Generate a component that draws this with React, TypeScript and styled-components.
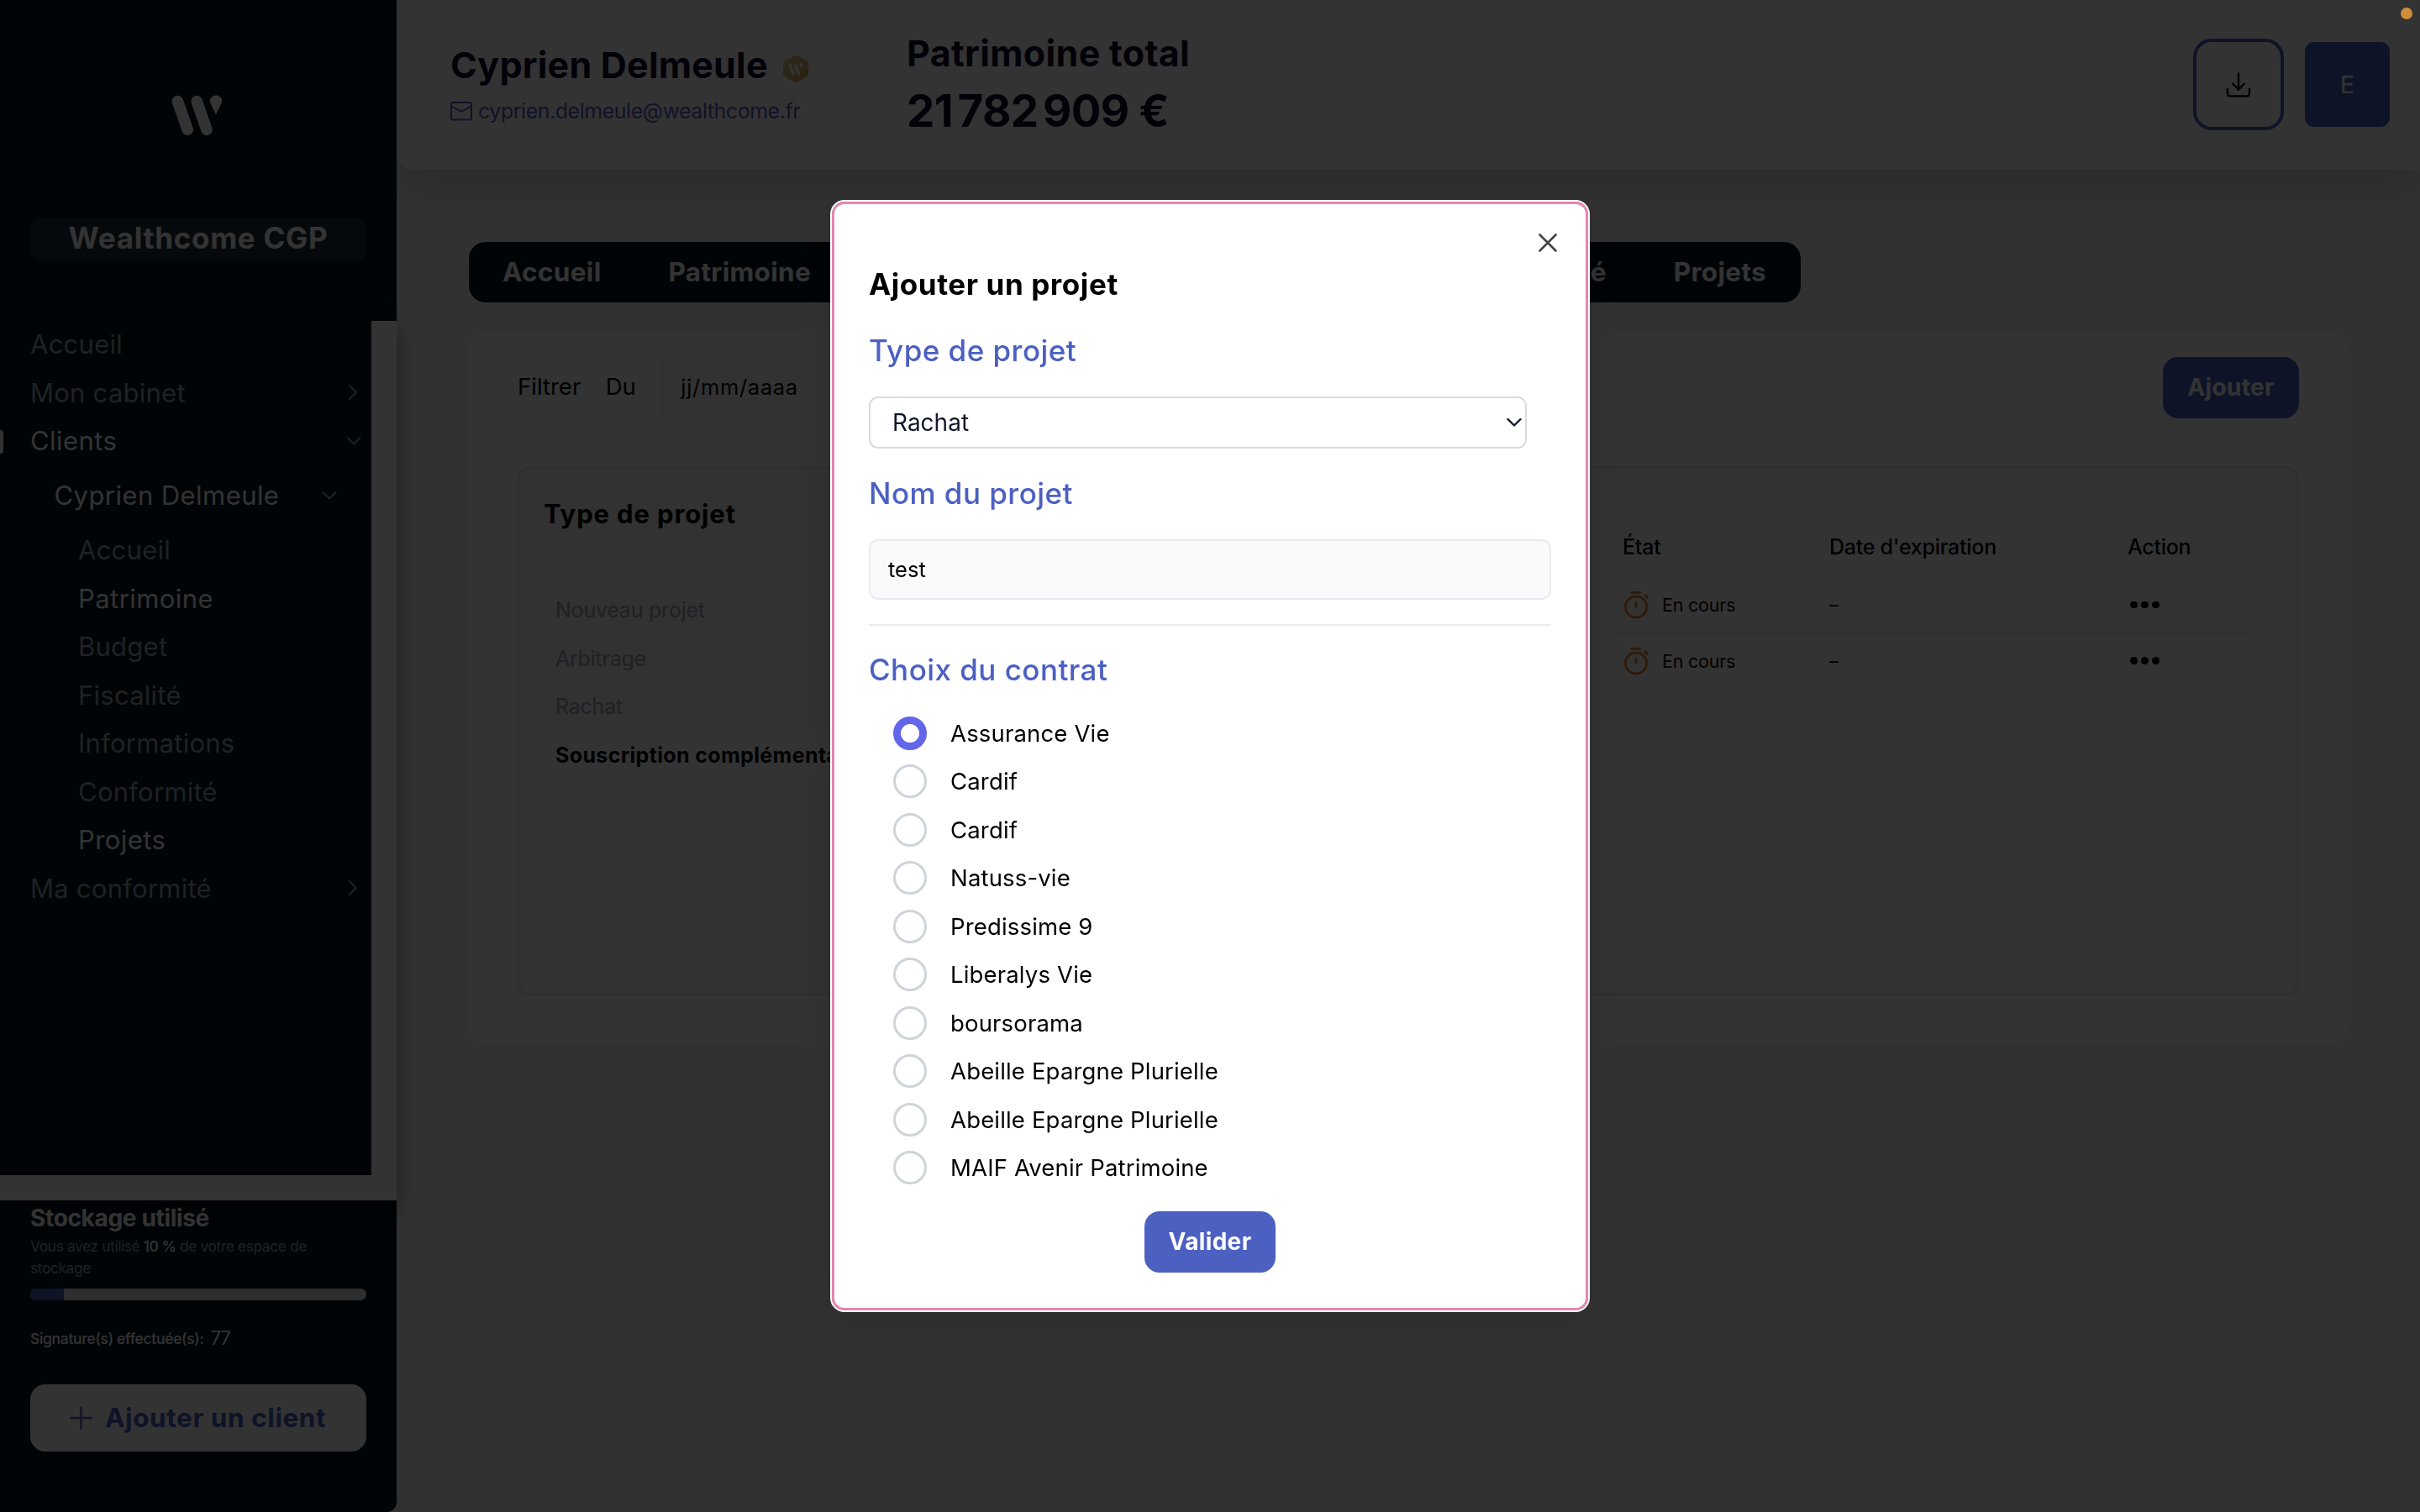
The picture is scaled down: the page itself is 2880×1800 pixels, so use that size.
import React, { useState } from "react";
import styled, { createGlobalStyle, css } from "styled-components";

const GlobalStyle = createGlobalStyle`
  *, *::before, *::after { box-sizing: border-box; }
  html, body { margin: 0; padding: 0; }
  body {
    font-family: Inter, "Liberation Sans", sans-serif;
    background: #f9fafb;
    overflow: hidden;
  }
  button, input { font-family: inherit; }
`;

const color = {
  night: "#001423",
  primary: "#4c60c2",
  muted: "#9ca3af",
  line: "#e5e7eb",
  ink: "#0f0b30",
};

/* ---------- Shell ---------- */

const Page = styled.div`
  display: flex;
  width: 2880px;
  height: 1800px;
  overflow: hidden;
`;

const Sidebar = styled.aside`
  position: relative;
  z-index: 1;
  display: flex;
  flex-direction: column;
  flex: none;
  width: 472px;
  height: 1800px;
  background: ${color.night};
  border-bottom-right-radius: 12px;
`;

const Brand = styled.div`
  display: flex;
  flex-direction: column;
  align-items: center;
  height: 382px;
  padding: 113px 36px 0;
  > svg { margin-right: 4px; }
`;

const Workspace = styled.div`
  width: 100%;
  height: 51px;
  margin-top: 97px;
  border-radius: 12px;
  background: rgba(255, 255, 255, 0.12);
  color: #fff;
  font-size: 35px;
  font-weight: 700;
  letter-spacing: 0.021em;
  line-height: 49px;
  text-align: center;
  white-space: nowrap;
`;

const NavScroll = styled.div`
  height: 1047px;
  padding: 0 30px 30px 0;
  background: #fff;
  box-shadow: 0 10px 28px rgba(0, 0, 0, 0.42);
`;

const Nav = styled.nav`
  display: flex;
  flex-direction: column;
  height: 1017px;
  background: ${color.night};
`;

const NavItem = styled.a<{ $level?: number; $active?: boolean; $tall?: boolean }>`
  position: relative;
  display: flex;
  align-items: center;
  justify-content: space-between;
  height: ${(p) => (p.$tall ? "72.5px" : "57.5px")};
  padding: 0 ${(p) => (p.$tall ? 41 : p.$active ? 12 : 16)}px 2px
    ${(p) => 36 + (p.$level ?? 0) * 28.5}px;
  color: ${(p) => (p.$active ? "#fff" : color.muted)};
  font-size: 31px;
  font-weight: 400;
  letter-spacing: ${(p) => (p.$active ? 0.014 : 0.008)}em;
  white-space: nowrap;
  svg { color: ${color.muted}; }
`;

const ActiveMark = styled.span`
  position: absolute;
  left: 0;
  top: 15px;
  width: 4px;
  height: 28px;
  border-radius: 0 4px 4px 0;
  background: #fff;
`;

const SidebarFooter = styled.div`
  display: flex;
  flex-direction: column;
  padding: 3px 36px 0;
`;

const StorageTitle = styled.div`
  color: #fff;
  font-size: 28px;
  font-weight: 700;
  letter-spacing: -0.012em;
  line-height: 36px;
`;

const StorageText = styled.div`
  margin-top: 3px;
  color: ${color.muted};
  font-size: 17.5px;
  letter-spacing: -0.026em;
  line-height: 26px;
  b { color: #fff; font-weight: 500; }
`;

const Progress = styled.div`
  height: 14px;
  margin-top: 11px;
  overflow: hidden;
  border-radius: 7px;
  background: ${color.line};
`;

const ProgressFill = styled.div`
  height: 100%;
  background: ${color.primary};
`;

const Signatures = styled.div`
  display: flex;
  align-items: center;
  gap: 8px;
  height: 30px;
  margin-top: 30px;
  color: #fff;
  font-size: 17.5px;
  font-weight: 500;
  letter-spacing: -0.018em;
  b { font-size: 22.5px; font-weight: 400; letter-spacing: -0.06em; line-height: 30px; }
`;

const AddClient = styled.button`
  display: flex;
  align-items: center;
  gap: 15px;
  height: 80px;
  margin-top: 40px;
  padding: 0 47px 1px;
  border: 0;
  border-radius: 18px;
  background: #fff;
  color: ${color.primary};
  font-size: 31.5px;
  font-weight: 700;
  letter-spacing: 0.018em;
  white-space: nowrap;
`;

/* ---------- Header ---------- */

const Main = styled.main`
  display: flex;
  flex-direction: column;
  flex: 1;
  min-width: 0;
  background: #f6f6f7;
`;

const Header = styled.header`
  display: flex;
  flex: none;
  height: 202px;
  padding: 0 36px 0 64px;
  border-bottom-left-radius: 20px;
  background: #fff;
  box-shadow: 0 26px 50px rgba(0, 0, 0, 0.12);
`;

const Identity = styled.div`
  width: 543px;
  padding-top: 49px;
`;

const ClientName = styled.div`
  display: flex;
  align-items: center;
  gap: 17px;
  height: 56px;
  color: ${color.ink};
  font-size: 43px;
  font-weight: 700;
  letter-spacing: 0.005em;
  svg { margin-top: 10px; }
`;

const ClientMail = styled.div`
  display: flex;
  align-items: center;
  gap: 7px;
  height: 40px;
  margin-top: 7px;
  color: ${color.primary};
  font-size: 25px;
  letter-spacing: -0.019em;
`;

const Wealth = styled.div`
  padding-top: 35px;
  color: ${color.ink};
  font-weight: 700;
`;

const WealthLabel = styled.div`
  font-size: 43px;
  letter-spacing: 0.008em;
  line-height: 56px;
`;

const WealthAmount = styled.div`
  margin-top: 7px;
  font-size: 53px;
  letter-spacing: -0.014em;
  line-height: 68px;
  white-space: nowrap;
  span { word-spacing: -6px; }
`;

const Actions = styled.div`
  display: flex;
  align-items: center;
  gap: 25px;
  height: 201px;
  margin-left: auto;
`;

const DownloadButton = styled.button`
  display: grid;
  place-items: center;
  width: 108px;
  height: 109px;
  padding: 0;
  border: 4px solid ${color.primary};
  border-radius: 22px;
  background: transparent;
  color: #000;
`;

const Avatar = styled.div`
  width: 101px;
  height: 101px;
  border-radius: 11px;
  background: ${color.primary};
  color: #fff;
  font-size: 29px;
  line-height: 101px;
  text-align: center;
`;

/* ---------- Content ---------- */

const Content = styled.div`
  display: flex;
  flex-direction: column;
  gap: 36px;
  padding: 86px;
`;

const Tabs = styled.div`
  display: flex;
  align-items: center;
  gap: 80px;
  width: 1585px;
  height: 72px;
  padding: 0 41px 2px 40px;
  border-radius: 20px;
  background: ${color.night};
  color: #fff;
  font-size: 31.5px;
  font-weight: 700;
  letter-spacing: 0.01em;
`;

const Tab = styled.span<{ $push?: boolean }>`
  margin-left: ${(p) => (p.$push ? "auto" : 0)};
`;

const Card = styled.section`
  width: 2236px;
  height: 847px;
  padding: 29px 58px 0;
  border-radius: 20px;
  background: #fff;
`;

const FilterBar = styled.div`
  display: flex;
  align-items: center;
  height: 73px;
  color: #000;
  font-size: 27.5px;
  > span { margin-right: 29.5px; padding-bottom: 3px; }
`;

const DateField = styled.div`
  width: 300px;
  height: 73px;
  padding-left: 22px;
  border: 2px solid #f1f2f4;
  border-radius: 12px;
  background: #fafbfb;
  font-size: 25.5px;
  letter-spacing: 0.026em;
  line-height: 67px;
`;

const SolidButton = styled.button<{ $width: number; $end?: boolean }>`
  width: ${(p) => p.$width}px;
  height: 73px;
  margin-left: ${(p) => (p.$end ? "auto" : 0)};
  padding: 0 0 1px;
  border: 0;
  border-radius: 18px;
  background: ${color.primary};
  color: #fff;
  font-size: 28px;
  font-weight: 700;
  letter-spacing: 0.012em;
`;

const Board = styled.div`
  display: flex;
  height: 630px;
  margin-top: 57px;
  overflow: hidden;
  border: 3px solid #e8eaec;
  border-radius: 16px;
`;

const TypePanel = styled.div`
  flex: none;
  width: 480px;
  padding: 32px 28px 0 27px;
  background: #f7f7f8;
  color: #000;
`;

const PanelTitle = styled.div`
  padding-left: 1px;
  font-size: 31px;
  font-weight: 700;
  letter-spacing: 0.028em;
  line-height: 44px;
  margin-bottom: 67px;
`;

const TypeRow = styled.div<{ $active?: boolean }>`
  height: 51px;
  margin-bottom: 6.5px;
  padding-left: 15px;
  border-radius: 14px;
  font-size: 25px;
  line-height: 51px;
  white-space: nowrap;
  color: ${color.muted};
  letter-spacing: -0.009em;
  ${(p) =>
    p.$active &&
    css`
      background: #fff;
      color: #000;
      font-weight: 700;
      letter-spacing: 0.014em;
    `}
`;

const Table = styled.div`
  flex: 1;
  padding: 55px 58px 0 80px;
  color: #000;
`;

const Row = styled.div<{ $head?: boolean }>`
  display: grid;
  grid-template-columns: 1fr 246px 355px 143px;
  align-items: center;
  height: ${(p) => (p.$head ? 75 : 66)}px;
  padding: ${(p) => (p.$head ? "2px 0 0" : "0 0 1px")};
  border-bottom: 1px solid ${color.line};
  font-size: ${(p) => (p.$head ? 25 : 21.5)}px;
  font-weight: ${(p) => (p.$head ? 500 : 400)};
  letter-spacing: -0.01em;
  &:last-child { border-bottom: 0; }
`;

const State = styled.div`
  display: flex;
  align-items: center;
  gap: 15px;
  padding-left: 1px;
`;

const Dots = styled.div`
  display: flex;
  gap: 4.5px;
  padding-left: 3px;
  i { width: 8.5px; height: 8.5px; border-radius: 50%; background: #000; }
`;

/* ---------- Modal ---------- */

const Overlay = styled.div`
  position: fixed;
  inset: 0;
  z-index: 10;
  display: flex;
  align-items: center;
  justify-content: center;
  background: rgba(0, 0, 0, 0.8);
`;

const Dialog = styled.div`
  display: flex;
  flex-direction: column;
  width: 900px;
  height: 1320px;
  padding: 35px 41px 0;
  border: 3px solid #e985b3;
  border-radius: 15px;
  outline: 2px solid #fff;
  background: #fff;
  box-shadow: 0 20px 60px rgba(0, 0, 0, 0.15);
  color: #000;
`;

const Close = styled.button`
  display: flex;
  align-self: flex-end;
  margin: 0 -7px 16px 0;
  padding: 0;
  border: 0;
  background: none;
  color: #444;
`;

const DialogTitle = styled.h2`
  margin: 0 0 35px;
  font-size: 35px;
  font-weight: 700;
  letter-spacing: 0.017em;
  line-height: 44px;
`;

const FieldLabel = styled.div`
  color: ${color.primary};
  font-size: 35px;
  font-weight: 500;
  letter-spacing: 0.013em;
  line-height: 44px;
`;

const Select = styled.div`
  display: flex;
  align-items: center;
  justify-content: space-between;
  width: 783px;
  height: 62px;
  margin: 33px 0 31px;
  padding: 0 4px 0 26px;
  border: 2px solid #d9dbe0;
  border-radius: 11px;
  color: #111827;
  font-size: 28px;
`;

const NameInput = styled.input`
  width: 812px;
  height: 72px;
  margin: 33px 0 29px;
  padding: 0 21px 2px;
  border: 2px solid #e9ebee;
  border-radius: 11px;
  background: #f9fafb;
  color: #000;
  font-size: 25.5px;
  outline: 0;
`;

const Divider = styled.div`
  height: 2px;
  margin-bottom: 30px;
  background: #e9ebee;
`;

const Options = styled.div`
  display: flex;
  flex-direction: column;
  margin: 25px 0 23px 29px;
`;

const Option = styled.label`
  display: flex;
  align-items: center;
  gap: 28px;
  height: 57.5px;
  font-size: 27.5px;
  letter-spacing: 0.006em;
`;

const Radio = styled.span<{ $checked: boolean }>`
  width: 40px;
  height: 40px;
  border: ${(p) => (p.$checked ? "9px solid #6366e9" : "3px solid #cfd4da")};
  border-radius: 50%;
`;

const Submit = styled(SolidButton)`
  align-self: center;
`;

const RecordingDot = styled.span`
  position: fixed;
  z-index: 11;
  top: 9px;
  right: 9px;
  width: 14px;
  height: 14px;
  border-radius: 50%;
  background: #cf8e3a;
`;

/* ---------- Icons ---------- */

const BrandMark = () => (
  <svg width="60" height="49" viewBox="0 0 60 49" fill="none">
    <g stroke="#fff" strokeWidth="13.6" strokeLinecap="round">
      <path d="M7.4 7.6 19.2 41.4" />
      <path d="M30.2 7.6 42 41.4" />
    </g>
    <path d="M46.200 9.600C44.600 4.800 48 .6 53 .6s8.400 4.200 6.800 9L53 23.600Z" fill="#fff" />
  </svg>
);

const ChevronRight = () => (
  <svg width="12" height="20" viewBox="0 0 12 20" fill="none">
    <path d="M2 2l8 8-8 8" stroke="currentColor" strokeWidth="2" strokeLinecap="round" strokeLinejoin="round" />
  </svg>
);

const ChevronDown = ({ stroke = 2 }: { stroke?: number }) => (
  <svg width="18" height="12" viewBox="0 0 18 12" fill="none">
    <path d="M1.500 2l7.500 7.500L16.500 2" stroke="currentColor" strokeWidth={stroke} strokeLinecap="round" strokeLinejoin="round" />
  </svg>
);

const Badge = () => (
  <svg width="32" height="34" viewBox="0 0 32 34" fill="none">
    <defs>
      <linearGradient id="gold" x1="0" y1="0" x2="1" y2="1">
        <stop offset="0" stopColor="#dccf9a" />
        <stop offset="1" stopColor="#d0a24c" />
      </linearGradient>
    </defs>
    <path d="M14 1.200a4 4 0 0 1 4 0l11 6.300a4 4 0 0 1 2 3.400v12.200a4 4 0 0 1-2 3.400l-11 6.300a4 4 0 0 1-4 0l-11-6.300a4 4 0 0 1-2-3.400V10.900a4 4 0 0 1 2-3.400z" fill="url(#gold)" />
    <g stroke="#fff" strokeWidth="3.600" strokeLinecap="round">
      <path d="M9.300 12.500l3.600 10" />
      <path d="M15.800 12.500l3.600 10" />
    </g>
    <path d="M20.800 12.600c-.5-1.500.5-2.400 1.800-2.400s2.300.9 1.800 2.400l-1.800 4z" fill="#fff" />
  </svg>
);

const MailIcon = () => (
  <svg width="26" height="24" viewBox="0 0 26 24" fill="none" stroke="currentColor" strokeWidth="2" strokeLinejoin="round">
    <rect x="1" y="2" width="24" height="20.500" rx="2" />
    <path d="M1.500 6.500 13 13l11.500-6.500" />
  </svg>
);

const DownloadIcon = () => (
  <svg width="30" height="30" viewBox="0 0 30 30" fill="none" stroke="currentColor" strokeWidth="2.400" strokeLinecap="round" strokeLinejoin="round">
    <path d="M15 1.500v19" />
    <path d="M8 13.500l7 7 7-7" />
    <path d="M2 20v5.500a3 3 0 0 0 3 3h20a3 3 0 0 0 3-3V20" />
  </svg>
);

const TimerIcon = () => (
  <svg width="31" height="34" viewBox="0 0 31 34" fill="none" stroke="#e8823a" strokeWidth="3" strokeLinecap="round">
    <circle cx="15" cy="19.500" r="12.600" />
    <path d="M9.500 2.500h10.500M15 14.500v4.500M26 5.800l2.600 2.600" />
  </svg>
);

const PlusIcon = () => (
  <svg width="27" height="28" viewBox="0 0 27 28" fill="none" stroke="currentColor" strokeWidth="2.400" strokeLinecap="round">
    <path d="M13.500 1.500v25M1.500 14h24" />
  </svg>
);

const CloseIcon = () => (
  <svg width="22" height="22" viewBox="0 0 22 22" fill="none" stroke="currentColor" strokeWidth="2.600" strokeLinecap="round">
    <path d="M1.500 1.500l19 19M20.500 1.500l-19 19" />
  </svg>
);

/* ---------- Data ---------- */

const clientPages = [
  { label: "Accueil" },
  { label: "Patrimoine", active: true },
  { label: "Budget" },
  { label: "Fiscalité" },
  { label: "Informations" },
  { label: "Conformité" },
  { label: "Projets", active: true },
];

const tabs = [
  { label: "Accueil" },
  { label: "Patrimoine" },
  { label: "Conformité", push: true },
  { label: "Projets" },
];

const projectTypes = ["Nouveau projet", "Arbitrage", "Rachat", "Souscription complémentaire"];

const contracts = [
  "Assurance Vie",
  "Cardif",
  "Cardif",
  "Natuss-vie",
  "Predissime 9",
  "Liberalys Vie",
  "boursorama",
  "Abeille Epargne Plurielle",
  "Abeille Epargne Plurielle",
  "MAIF Avenir Patrimoine",
];

export default function App() {
  const [selected, setSelected] = useState(0);
  const [name, setName] = useState("test");
  const storage = 10;

  return (
    <>
      <GlobalStyle />
      <Page>
        <Sidebar>
          <Brand>
            <BrandMark />
            <Workspace>Wealthcome CGP</Workspace>
          </Brand>
          <NavScroll>
            <Nav>
              <NavItem>Accueil</NavItem>
              <NavItem>Mon cabinet <ChevronRight /></NavItem>
              <NavItem $active>
                <ActiveMark />
                Clients <ChevronDown />
              </NavItem>
              <NavItem $active $tall $level={1}>Cyprien Delmeule <ChevronDown /></NavItem>
              {clientPages.map((p) => (
                <NavItem key={p.label} $level={2} $active={p.active}>{p.label}</NavItem>
              ))}
              <NavItem>Ma conformité <ChevronRight /></NavItem>
            </Nav>
          </NavScroll>
          <SidebarFooter>
            <StorageTitle>Stockage utilisé</StorageTitle>
            <StorageText>
              Vous avez utilisé <b>{storage} %</b> de votre espace de
              <br />
              stockage
            </StorageText>
            <Progress>
              <ProgressFill style={{ width: `${storage}%` }} />
            </Progress>
            <Signatures>Signature(s) effectuée(s): <b>77</b></Signatures>
            <AddClient><PlusIcon />Ajouter un client</AddClient>
          </SidebarFooter>
        </Sidebar>

        <Main>
          <Header>
            <Identity>
              <ClientName>Cyprien Delmeule <Badge /></ClientName>
              <ClientMail><MailIcon />cyprien.delmeule@wealthcome.fr</ClientMail>
            </Identity>
            <Wealth>
              <WealthLabel>Patrimoine total</WealthLabel>
              <WealthAmount><span>21 782 909</span> €</WealthAmount>
            </Wealth>
            <Actions>
              <DownloadButton aria-label="Télécharger"><DownloadIcon /></DownloadButton>
              <Avatar>E</Avatar>
            </Actions>
          </Header>

          <Content>
            <Tabs>
              {tabs.map((t) => <Tab key={t.label} $push={t.push}>{t.label}</Tab>)}
            </Tabs>
            <Card>
              <FilterBar>
                <span>Filtrer</span>
                <span>Du</span>
                <DateField>jj/mm/aaaa</DateField>
                <SolidButton $width={162} $end>Ajouter</SolidButton>
              </FilterBar>
              <Board>
                <TypePanel>
                  <PanelTitle>Type de projet</PanelTitle>
                  {projectTypes.map((t, i) => (
                    <TypeRow key={t} $active={i === 3}>{t}</TypeRow>
                  ))}
                </TypePanel>
                <Table>
                  <Row $head>
                    <span />
                    <span>État</span>
                    <span>Date d'expiration</span>
                    <span>Action</span>
                  </Row>
                  {[0, 1].map((i) => (
                    <Row key={i}>
                      <span />
                      <State><TimerIcon />En cours</State>
                      <span>–</span>
                      <Dots><i /><i /><i /></Dots>
                    </Row>
                  ))}
                </Table>
              </Board>
            </Card>
          </Content>
        </Main>
      </Page>

      <Overlay>
        <Dialog role="dialog">
          <Close aria-label="Fermer"><CloseIcon /></Close>
          <DialogTitle>Ajouter un projet</DialogTitle>
          <FieldLabel>Type de projet</FieldLabel>
          <Select>Rachat <ChevronDown stroke={2.4} /></Select>
          <FieldLabel>Nom du projet</FieldLabel>
          <NameInput value={name} onChange={(e) => setName(e.target.value)} />
          <Divider />
          <FieldLabel>Choix du contrat</FieldLabel>
          <Options>
            {contracts.map((c, i) => (
              <Option key={i} onClick={() => setSelected(i)}>
                <Radio $checked={i === selected} />
                {c}
              </Option>
            ))}
          </Options>
          <Submit $width={156}>Valider</Submit>
        </Dialog>
      </Overlay>
      <RecordingDot />
    </>
  );
}
